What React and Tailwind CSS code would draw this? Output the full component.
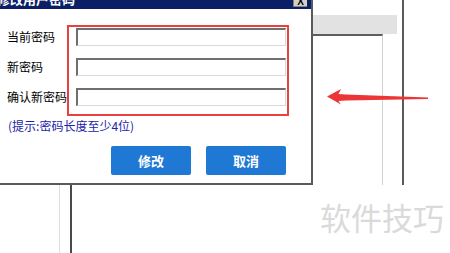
import React from "react";

const font = { fontFamily: '"Noto Sans CJK SC", "Noto Sans", sans-serif' };

const labels = ["当前密码", "新密码", "确认新密码"];

const PwdInput = () => (
  <div className="h-[18px] w-[210px] bg-white border-t-2 border-l-2 border-t-[#6f6f6f] border-l-[#6f6f6f] border-r border-b border-r-[#d9d9d9] border-b-[#d9d9d9]"></div>
);

const App = () => {
  return (
    <div
      className="relative w-[450px] h-[253px] bg-white overflow-hidden flex flex-col"
      style={font}
    >
      {/* top row: dialog + window behind */}
      <div className="flex h-[185px]">
        {/* Dialog */}
        <div className="w-[313px] h-[185px] flex flex-col bg-white border-r-2 border-b-2 border-[#5a5a5a]">
          {/* Title bar */}
          <div className="h-[9px] bg-[#0b1f66] flex justify-between overflow-hidden">
            <span className="-mt-[9px] -ml-[3px] text-[13px] leading-[16px] font-bold text-white whitespace-nowrap">
              修改用户密码
            </span>
            <div className="mr-[4px] w-[14px] h-[7px] bg-[#d4d0c8] border-b border-l border-[#808080] flex items-end justify-center overflow-hidden">
              <span className="text-[10px] leading-[9px] font-bold text-black" style={{ fontFamily: '"Liberation Sans", sans-serif' }}>
                X
              </span>
            </div>
          </div>

          {/* Body */}
          <div className="flex-1 flex flex-col pt-[16px] pl-[7px]">
            <div className="flex">
              <div className="w-[60px] flex flex-col gap-3 pt-[3px]">
                {labels.map((l) => (
                  <div key={l} className="h-[18px] flex items-center text-[12px] text-black whitespace-nowrap">
                    {l}
                  </div>
                ))}
              </div>
              <div className="w-[222px] h-[91px] border-2 border-[#e8413f] flex flex-col gap-3 pt-[1px] pl-[7px]">
                <PwdInput />
                <PwdInput />
                <PwdInput />
              </div>
            </div>

            <p className="mt-[3px] ml-[1px] text-[12px] leading-[14px] text-[#2323a8] whitespace-nowrap">
              (提示:密码长度至少4位)
            </p>

            <div className="mt-[13px] flex gap-[15px] pl-[104px]">
              <button className="w-[80px] h-[29px] rounded-[2px] bg-[#1f78d3] text-white text-[13px] font-bold">
                修改
              </button>
              <button className="w-[80px] h-[29px] rounded-[2px] bg-[#1f78d3] text-white text-[13px] font-bold">
                取消
              </button>
            </div>
          </div>
        </div>

        {/* Window behind, right of dialog */}
        <div className="w-[89px] flex flex-col pt-[15px]">
          <div className="w-[84px] h-[19px] bg-[#e2e2e2]"></div>
          <div className="w-[70px] flex-1 border-t-2 border-t-[#5e5e5e] border-r border-r-[#d2d2d2]"></div>
        </div>
        <div className="flex-1 border-l-2 border-[#5a5a5a]"></div>
      </div>

      {/* bottom row: window behind, below dialog */}
      <div className="flex-1 flex pl-[59px]">
        <div className="w-px bg-[#dedede]"></div>
        <div className="ml-[10px] w-[2px] bg-[#4a4a4a]"></div>
      </div>

      {/* Annotation arrow */}
      <svg className="absolute left-0 top-0 pointer-events-none" width="450" height="253">
        <polygon
          points="327,96.5 341,89 338.5,94 346,94.5 428,97.5 428,99 346,100.5 338.5,101 341,104.5"
          fill="#ec3535"
        />
      </svg>

      {/* Watermark */}
      <div className="absolute left-[320px] top-[198px] text-[31px] leading-[38px] text-[#dadada] tracking-[0px] whitespace-nowrap">
        软件技巧
      </div>
    </div>
  );
};

export default App;
